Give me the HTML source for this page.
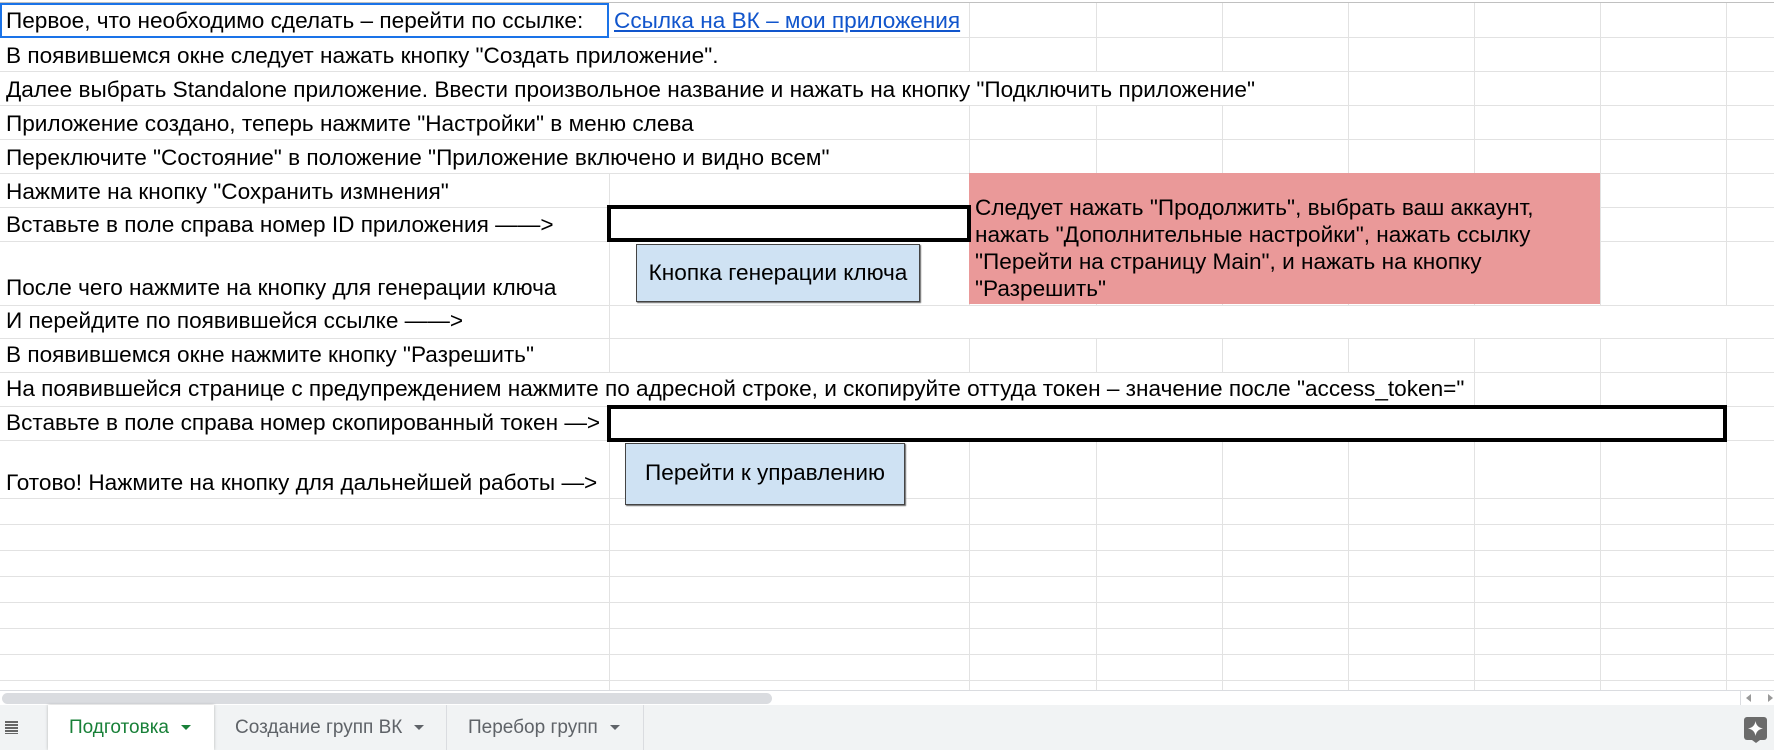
<!DOCTYPE html>
<html><head><meta charset="utf-8"><style>
*{margin:0;padding:0;box-sizing:border-box}
body{width:1774px;height:750px;overflow:hidden;background:#fff;position:relative;font-family:"Liberation Sans",Arial,sans-serif;}
.h{position:absolute;left:0;width:1774px;height:1px;background:#e2e2e2}
.v{position:absolute;top:3px;height:687px;width:1px;background:#e2e2e2}
.w{position:absolute;background:#fff}
.t{position:absolute;font-size:22.6px;color:#000;white-space:nowrap;line-height:26px}
.tab{position:absolute;top:705px;height:45px;font-size:19px;line-height:45px;color:#5f6368;white-space:nowrap}
.arr{display:inline-block;width:0;height:0;border-left:5px solid transparent;border-right:5px solid transparent;border-top:5px solid #5f6368;vertical-align:middle;margin-left:12px}
</style></head><body>
<div class="h" style="top:2px;background:#c0c0c0"></div>
<div class="v" style="left:609px"></div>
<div class="v" style="left:969px"></div>
<div class="v" style="left:1096px"></div>
<div class="v" style="left:1222px"></div>
<div class="v" style="left:1348px"></div>
<div class="v" style="left:1474px"></div>
<div class="v" style="left:1600px"></div>
<div class="v" style="left:1726px"></div>
<div class="w" style="left:0;top:3px;width:968px;height:34px"></div>
<div class="w" style="left:0;top:38px;width:968px;height:33px"></div>
<div class="w" style="left:0;top:72px;width:1347px;height:33px"></div>
<div class="w" style="left:0;top:106px;width:968px;height:33px"></div>
<div class="w" style="left:0;top:140px;width:968px;height:33px"></div>
<div class="w" style="left:0;top:3px;width:608px;height:495px"></div>
<div class="w" style="left:610px;top:306px;width:1164px;height:32px"></div>
<div class="w" style="left:0;top:373px;width:1473px;height:33px"></div>
<div class="h" style="top:37px"></div><div class="h" style="top:71px"></div><div class="h" style="top:105px"></div><div class="h" style="top:139px"></div><div class="h" style="top:173px"></div><div class="h" style="top:207px"></div><div class="h" style="top:241px"></div><div class="h" style="top:305px"></div><div class="h" style="top:338px"></div><div class="h" style="top:372px"></div><div class="h" style="top:406px"></div><div class="h" style="top:440px"></div><div class="h" style="top:498px"></div><div class="h" style="top:524px"></div><div class="h" style="top:550px"></div><div class="h" style="top:576px"></div><div class="h" style="top:602px"></div><div class="h" style="top:628px"></div><div class="h" style="top:654px"></div><div class="h" style="top:680px"></div>

<div class="t" style="left:6px;top:8px">Первое, что необходимо сделать – перейти по ссылке:</div>
<div class="t" style="left:614px;top:8px;color:#1155cc;text-decoration:underline">Ссылка на ВК – мои приложения</div>
<div style="position:absolute;left:0;top:3px;width:609px;height:35px;border:2px solid #1a73e8"></div>
<div class="t" style="left:6px;top:43px">В появившемся окне следует нажать кнопку "Создать приложение".</div>
<div class="t" style="left:6px;top:77px">Далее выбрать Standalone приложение. Ввести произвольное название и нажать на кнопку "Подключить приложение"</div>
<div class="t" style="left:6px;top:111px">Приложение создано, теперь нажмите "Настройки" в меню слева</div>
<div class="t" style="left:6px;top:145px">Переключите "Состояние" в положение "Приложение включено и видно всем"</div>
<div class="t" style="left:6px;top:179px">Нажмите на кнопку "Сохранить измнения"</div>
<div class="t" style="left:6px;top:212px">Вставьте в поле справа номер ID приложения ——&gt;</div>
<div class="t" style="left:6px;top:275px">После чего нажмите на кнопку для генерации ключа</div>
<div class="t" style="left:6px;top:308px">И перейдите по появившейся ссылке ——&gt;</div>
<div class="t" style="left:6px;top:342px">В появившемся окне нажмите кнопку "Разрешить"</div>
<div class="t" style="left:6px;top:376px">На появившейся странице с предупреждением нажмите по адресной строке, и скопируйте оттуда токен – значение после "access_token="</div>
<div class="t" style="left:6px;top:410px">Вставьте в поле справа номер скопированный токен —&gt;</div>
<div class="t" style="left:6px;top:470px">Готово! Нажмите на кнопку для дальнейшей работы —&gt;</div>

<div style="position:absolute;left:969px;top:173px;width:631px;height:131px;background:#ea9999"></div>
<div class="t" style="left:975px;top:194px;line-height:27px;white-space:nowrap">Следует нажать "Продолжить", выбрать ваш аккаунт,<br>нажать "Дополнительные настройки", нажать ссылку<br>"Перейти на страницу Main", и нажать на кнопку<br>"Разрешить"</div>

<div style="position:absolute;left:607px;top:205px;width:364px;height:37px;border:4px solid #000;background:#fff"></div>
<div style="position:absolute;left:636px;top:244px;width:284px;height:58px;background:#cfe2f3;border:1px solid #444;box-shadow:1px 1px 1px #666;font-size:22.6px;line-height:56px;text-align:center;white-space:nowrap">Кнопка генерации ключа</div>
<div style="position:absolute;left:607px;top:405px;width:1120px;height:37px;border:4px solid #000;background:#fff"></div>
<div style="position:absolute;left:625px;top:443px;width:280px;height:62px;background:#cfe2f3;border:1px solid #444;box-shadow:1px 1px 1px #666;font-size:22.6px;line-height:58px;text-align:center;white-space:nowrap">Перейти к управлению</div>

<div style="position:absolute;left:0;top:690px;width:1774px;height:15px;background:#fff;border-top:1px solid #dadce0"></div>
<div style="position:absolute;left:2px;top:693px;width:770px;height:11px;background:#dadce0;border-radius:6px"></div>
<div style="position:absolute;left:1740px;top:691px;width:1px;height:14px;background:#dadce0"></div>
<div style="position:absolute;left:1746px;top:694px;width:0;height:0;border-top:4px solid transparent;border-bottom:4px solid transparent;border-right:5px solid #999"></div>
<div style="position:absolute;left:1768px;top:694px;width:0;height:0;border-top:4px solid transparent;border-bottom:4px solid transparent;border-left:5px solid #999"></div>
<div style="position:absolute;left:0;top:705px;width:1774px;height:45px;background:#f1f3f4"></div>
<div style="position:absolute;left:5px;top:721px;width:13px;height:13px;background:repeating-linear-gradient(#666 0 2px,transparent 2px 3px)"></div>
<div style="position:absolute;left:48px;top:705px;width:166px;height:45px;background:#fff;box-shadow:0 0 3px rgba(0,0,0,.25)"></div>
<div class="tab" style="left:69px;color:#188038">Подготовка<span class="arr" style="border-top-color:#188038"></span></div>
<div class="tab" style="left:235px">Создание групп ВК<span class="arr"></span></div>
<div style="position:absolute;left:446px;top:705px;width:1px;height:45px;background:#dadce0"></div>
<div class="tab" style="left:468px">Перебор групп<span class="arr"></span></div>
<div style="position:absolute;left:643px;top:705px;width:1px;height:45px;background:#dadce0"></div>
<div style="position:absolute;left:1744px;top:717px;width:23px;height:23px;background:#6b6b6b;border-radius:3px"></div>
<div style="position:absolute;left:1752px;top:740px;width:0;height:0;border-left:4px solid transparent;border-right:4px solid transparent;border-top:3px solid #6b6b6b"></div>
<svg style="position:absolute;left:1744px;top:717px" width="23" height="23" viewBox="0 0 23 23"><path d="M11.5 4 Q12.5 10.5 19 11.5 Q12.5 12.5 11.5 19 Q10.5 12.5 4 11.5 Q10.5 10.5 11.5 4Z" fill="#fff"/></svg>
</body></html>
